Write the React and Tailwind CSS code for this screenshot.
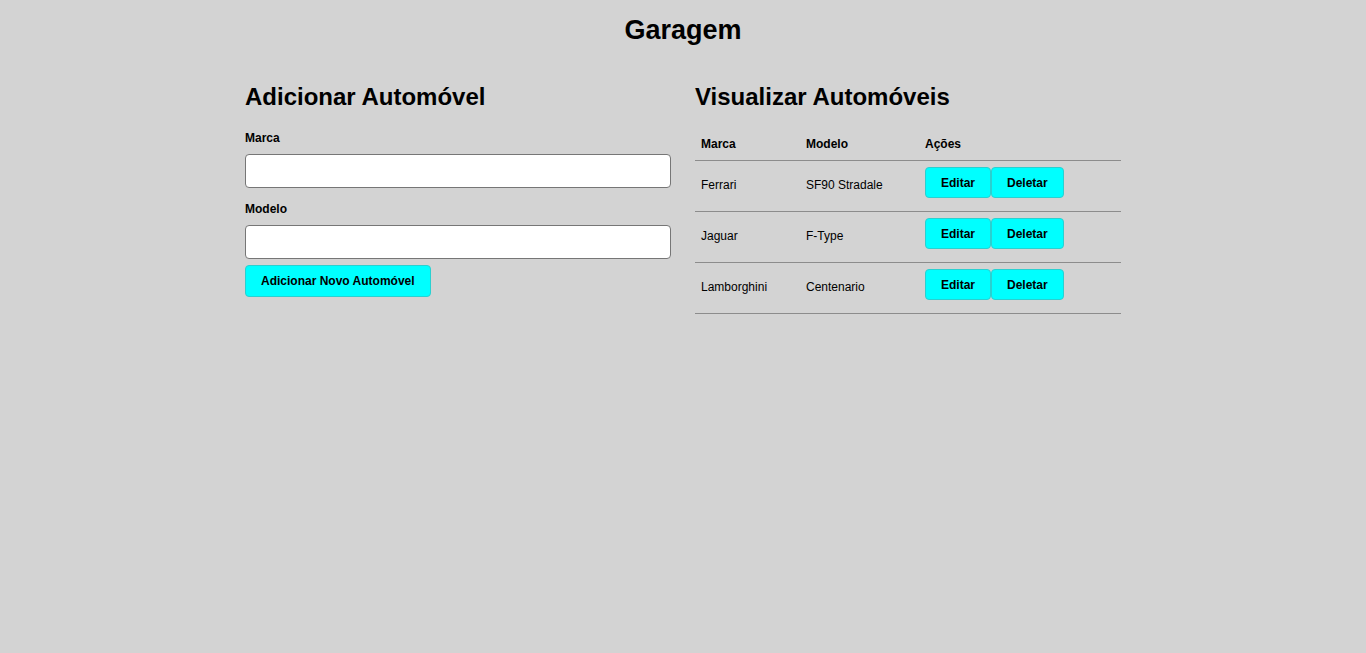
import React, { useState } from "react";

const carros = [
    { marca: "Ferrari", modelo: "SF90 Stradale" },
    { marca: "Jaguar", modelo: "F-Type" },
    { marca: "Lamborghini", modelo: "Centenario" },
];

function Botao({ children, className = "" }) {
    return (
        <button
            type="button"
            className={`h-[31px] px-[15px] bg-[#00ffff] border border-[#2ad0d0] rounded-[4px] text-[12px] font-bold leading-[14px] text-black ${className}`}
        >
            {children}
        </button>
    );
}

export default function App() {
    const [marca, setMarca] = useState("");
    const [modelo, setModelo] = useState("");

    return (
        <div className="min-h-[653px] bg-[#d3d3d3] text-black font-['Liberation_Sans',Arial,sans-serif]">
            <h1 className="pt-[15px] text-center text-[27px] leading-[31px] font-bold">Garagem</h1>

            <div className="w-[876px] mx-auto mt-[37px] grid grid-cols-2 gap-6">
                <div>
                    <h2 className="text-[24px] leading-[28px] font-bold">Adicionar Automóvel</h2>
                    <form className="flex flex-col items-start mt-[20px]" onSubmit={(e) => e.preventDefault()}>
                        <label className="text-[12px] leading-[14px] font-bold">Marca</label>
                        <input
                            value={marca}
                            onChange={(e) => setMarca(e.target.value)}
                            className="mt-[9px] w-full h-[34px] bg-white border border-[#767676] rounded-[4px] px-2 text-[13px]"
                        />
                        <label className="mt-[14px] text-[12px] leading-[14px] font-bold">Modelo</label>
                        <input
                            value={modelo}
                            onChange={(e) => setModelo(e.target.value)}
                            className="mt-[9px] w-full h-[34px] bg-white border border-[#767676] rounded-[4px] px-2 text-[13px]"
                        />
                        <Botao className="mt-[6px] h-[32px]">Adicionar Novo Automóvel</Botao>
                    </form>
                </div>

                <div>
                    <h2 className="text-[24px] leading-[28px] font-bold">Visualizar Automóveis</h2>
                    <table className="mt-[15px] w-full border-collapse text-[12px] leading-[14px]">
                        <thead>
                            <tr className="border-b border-[#8c8c8c]">
                                <th className="w-[105px] px-[6px] pt-[11px] pb-[9px] text-left font-bold">Marca</th>
                                <th className="w-[119px] px-[6px] pt-[11px] pb-[9px] text-left font-bold">Modelo</th>
                                <th className="px-[6px] pt-[11px] pb-[9px] text-left font-bold">Ações</th>
                            </tr>
                        </thead>
                        <tbody>
                            {carros.map((c) => (
                                <tr key={c.marca} className="border-b border-[#8c8c8c] h-[51px]">
                                    <td className="px-[6px] pb-[2px] align-middle">{c.marca}</td>
                                    <td className="px-[6px] pb-[2px] align-middle">{c.modelo}</td>
                                    <td className="px-[6px] pt-[6px] align-top">
                                        <div className="flex">
                                            <Botao>Editar</Botao>
                                            <Botao>Deletar</Botao>
                                        </div>
                                    </td>
                                </tr>
                            ))}
                        </tbody>
                    </table>
                </div>
            </div>
        </div>
    );
}
